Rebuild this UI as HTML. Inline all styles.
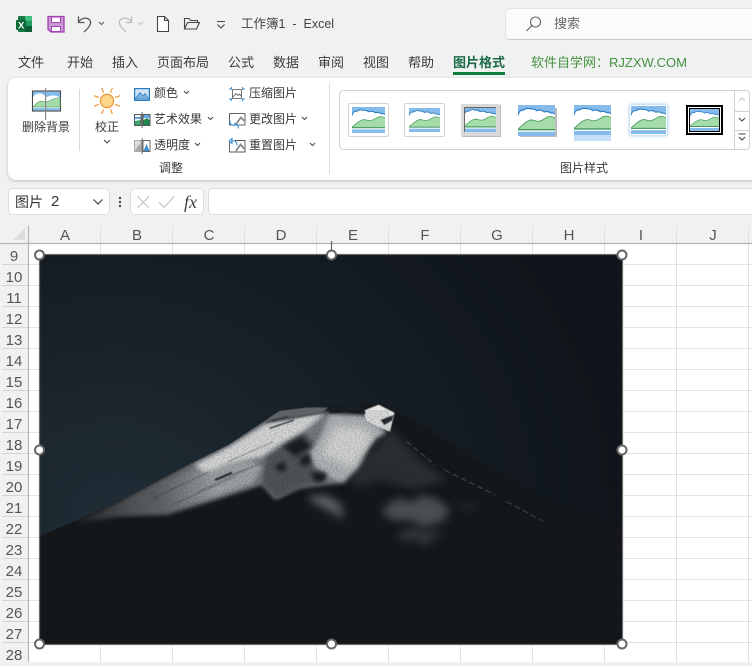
<!DOCTYPE html>
<html><head><meta charset="utf-8">
<style>
html,body{margin:0;padding:0}
body{width:752px;height:662px;overflow:hidden;position:relative;background:#f0f1f1;font-family:"Liberation Sans","Noto Sans CJK SC",sans-serif;color:#3a3a3a}
.t{position:absolute;white-space:nowrap;font-size:12.5px;line-height:16px}
.tab{position:absolute;top:55px;font-size:13px;line-height:16px;color:#3c3c3c;white-space:nowrap}
svg{position:absolute;overflow:visible}
.ab{position:absolute;box-sizing:border-box}
.r{position:absolute;left:0;width:28px;text-align:center;font-size:15px;line-height:21px;color:#555}
.c{position:absolute;top:227px;width:72px;text-align:center;font-size:15px;line-height:17px;color:#555}
filter{color-interpolation-filters:sRGB}
</style></head><body>

<svg width="0" height="0" style="position:absolute">
<defs>
<symbol id="pic" viewBox="0 0 34 27" preserveAspectRatio="none">
<rect width="34" height="27" fill="#85bbeb"/>
<path d="M0 9Q1 4 5 4.500Q8 2 12 3.500Q15 3 17 5Q21 3.500 24 6Q28 5 30 7Q33 6.500 34 8V22H0Z" fill="#fff"/>
<path d="M0 9Q1 4 5 4.500Q8 2 12 3.500Q15 3 17 5Q21 3.500 24 6Q28 5 30 7Q33 6.500 34 8" fill="none" stroke="#2a7cc0" stroke-width="1"/>
<path d="M0 21C4 18 7 14 12 13C15 13 17 15 20 14C24 13 26 10 29 10C31 10 33 11 34 11V21Z" fill="#a5dca9"/>
<path d="M0 21C4 18 7 14 12 13C15 13 17 15 20 14C24 13 26 10 29 10C31 10 33 11 34 11" fill="none" stroke="#55a56a" stroke-width=".9"/>
<rect y="21" width="34" height="1.100" fill="#2f8a4c"/>
<rect y="22.100" width="34" height="1.200" fill="#fff"/>
</symbol>
<filter id="b0" color-interpolation-filters="sRGB" x="-30%" y="-30%" width="160%" height="160%"><feGaussianBlur stdDeviation="1.500"/></filter>
<filter id="b1" color-interpolation-filters="sRGB" x="-30%" y="-30%" width="160%" height="160%"><feGaussianBlur stdDeviation="6"/></filter>
<filter id="b2" color-interpolation-filters="sRGB" x="-30%" y="-30%" width="160%" height="160%"><feGaussianBlur stdDeviation="12"/></filter>
<filter id="b3" color-interpolation-filters="sRGB" x="-10%" y="-20%" width="120%" height="140%"><feGaussianBlur stdDeviation="16"/></filter>
<filter id="cl" color-interpolation-filters="sRGB" x="-80%" y="-80%" width="260%" height="260%"><feTurbulence type="fractalNoise" baseFrequency=".025" numOctaves="3" seed="7" result="n"/><feDisplacementMap in="SourceGraphic" in2="n" scale="45" xChannelSelector="R" yChannelSelector="G"/><feGaussianBlur stdDeviation="13"/></filter>
<filter id="nz" color-interpolation-filters="sRGB" x="0" y="0" width="100%" height="100%"><feTurbulence type="fractalNoise" baseFrequency=".3 .5" numOctaves="2" seed="4"/><feColorMatrix values="0 0 0 0 0  0 0 0 0 0  0 0 0 0 0  2.400 0 0 0 -.95"/></filter>
<radialGradient id="sky" gradientUnits="userSpaceOnUse" cx="200" cy="800" r="1350">
<stop offset="0" stop-color="#202d36"/><stop offset=".35" stop-color="#19232a"/><stop offset=".7" stop-color="#131a20"/><stop offset="1" stop-color="#0f151a"/></radialGradient>
<linearGradient id="snowL" gradientUnits="userSpaceOnUse" x1="90" y1="0" x2="430" y2="0"><stop offset="0" stop-color="#24282b"/><stop offset=".45" stop-color="#55595c"/><stop offset="1" stop-color="#7c8083"/></linearGradient>
<linearGradient id="snowM" gradientUnits="userSpaceOnUse" x1="280" y1="0" x2="470" y2="0"><stop offset="0" stop-color="#53575a"/><stop offset="1" stop-color="#a6a9ab"/></linearGradient>
<clipPath id="mclip"><path d="M0 858L90 815L200 760L300 700L400 640L500 585L600 510L640 480L710 470L770 470L860 468L905 458L945 485L1050 550L1200 660L1350 750L1548 835V1183H0Z"/></clipPath>
<clipPath id="snowclip"><path d="M100 815L200 760L300 700L400 640L500 585L600 510L770 480L930 480L930 560L840 670L800 710L690 725L625 770L590 715L480 755L340 805L220 815Z"/></clipPath>
</defs>
</svg>

<!-- Title bar -->
<svg style="left:14px;top:14px" width="20" height="20" viewBox="0 0 20 20"><rect x="4" y="2" width="14" height="16" rx="1" fill="#1a7a45"/><rect x="11" y="2" width="7" height="5" fill="#3fc17f"/><rect x="11" y="7" width="7" height="5" fill="#1f9a5b"/><rect x="11" y="12" width="7" height="6" fill="#0f5f37"/><rect x="2" y="6" width="10" height="10" rx="1" fill="#0f6a3a"/><text x="4" y="14.500" font-size="9.500" font-weight="700" fill="#fff" font-family="Liberation Sans">X</text></svg>
<svg style="left:47px;top:15px" width="18" height="18" viewBox="0 0 18 18"><path d="M1 1.500H17V17H4L1 14.500Z" fill="#c99ad3" stroke="#a23fb3" stroke-width="1.300"/><rect x="4.500" y="2" width="9" height="5.500" fill="#fff" stroke="#a23fb3"/><rect x="4.500" y="11.500" width="9" height="5" fill="#fff" stroke="#a23fb3"/></svg>
<svg style="left:76px;top:14px" width="32" height="20" viewBox="0 0 32 20"><path d="M2.500 2.500V8.500H8.500M2.500 8C5 4.500 9 3 12.500 5C16.500 7.500 15 12 8 18" fill="none" stroke="#555" stroke-width="1.300"/><path d="M23 8L25.500 10.500L28 8" fill="none" stroke="#555" stroke-width="1.100"/></svg>
<svg style="left:115px;top:14px" width="32" height="20" viewBox="0 0 32 20"><path d="M16.500 2.500V8.500H10.500M16.500 8C14 4.500 10 3 6.500 5C2.500 7.500 4 12 11 18" fill="none" stroke="#bdbdbd" stroke-width="1.300"/><path d="M23 8L25.500 10.500L28 8" fill="none" stroke="#c4c4c4" stroke-width="1.100"/></svg>
<svg style="left:156px;top:15px" width="14" height="18" viewBox="0 0 14 18"><path d="M1.500 1.500H8.500L12.500 5.500V16.500H1.500ZM8.500 1.500V5.500H12.500" fill="#fff" stroke="#444" stroke-width="1.100"/></svg>
<svg style="left:183px;top:17px" width="18" height="14" viewBox="0 0 18 14"><path d="M1.500 12V1.500H6L7.500 3.500H14.500V5.500M1.500 12L4.500 5.500H16.500L13.500 12Z" fill="none" stroke="#444" stroke-width="1.100"/></svg>
<svg style="left:215px;top:20px" width="12" height="10" viewBox="0 0 12 10"><path d="M2 1.500H10M2.500 4.500L6 8L9.500 4.500" fill="none" stroke="#444" stroke-width="1.100"/></svg>
<div class="t" style="left:241px;top:16px;font-size:12.500px;color:#444">工作簿1&nbsp; - &nbsp;Excel</div>

<div class="ab" style="left:505px;top:8px;width:260px;height:32px;background:#fbfbfb;border:1px solid #e2e2e2;border-bottom:1.500px solid #c9c9c9;border-radius:5px"></div>
<svg style="left:525px;top:15px" width="18" height="18" viewBox="0 0 18 18"><circle cx="10.500" cy="7" r="5" fill="none" stroke="#666" stroke-width="1.100"/><path d="M7 10.500L1.500 16" stroke="#666" stroke-width="1.200"/></svg>
<div class="t" style="left:554px;top:16px;font-size:13px;color:#666">搜索</div>

<!-- Tabs -->
<div class="tab" style="left:18px">文件</div>
<div class="tab" style="left:67px">开始</div>
<div class="tab" style="left:112px">插入</div>
<div class="tab" style="left:157px">页面布局</div>
<div class="tab" style="left:228px">公式</div>
<div class="tab" style="left:273px">数据</div>
<div class="tab" style="left:318px">审阅</div>
<div class="tab" style="left:363px">视图</div>
<div class="tab" style="left:408px">帮助</div>
<div class="tab" style="left:453px;font-weight:700;color:#1a6b45">图片格式</div>
<div class="ab" style="left:453px;top:72px;width:52px;height:2.500px;background:#107c41"></div>
<div class="tab" style="left:531px;font-size:13px;color:#45913f">软件自学网&#xFF1A;RJZXW.COM</div>

<!-- Ribbon -->
<div class="ab" style="left:8px;top:78px;width:760px;height:102px;background:#fff;border-radius:8px;box-shadow:0 1px 3px rgba(0,0,0,.2)"></div>

<svg style="left:31px;top:88px" width="30" height="34" viewBox="0 0 30 34"><rect x="1.500" y="3" width="28" height="20" fill="#fff" stroke="#444" stroke-width="1.100"/><rect x="2" y="3.500" width="27" height="6" fill="#85bbeb"/><path d="M2 9.500C4 5 10 4 14 8L16 9C20 7 25 7 29 9.500V19H2Z" fill="#fff"/><rect x="2" y="20" width="27" height="2.500" fill="#8dc0ec"/><path d="M2 19C6 14 10 12 14 14C18 15 22 9 29 10V19Z" fill="#a5dca9" stroke="#5aa56f" stroke-width=".7"/><rect x="14" y="0" width="1.200" height="32" fill="#8a8a8a"/></svg>
<div class="t" style="left:22px;top:119px;font-size:12px">删除背景</div>
<div class="ab" style="left:79px;top:89px;width:1px;height:62px;background:#d9d9d9"></div>

<svg style="left:92px;top:86px" width="30" height="30" viewBox="0 0 30 30"><circle cx="15" cy="15" r="6.700" fill="#fbd68a" stroke="#ea8a22" stroke-width="1"/><path d="M11.600 6.700L9.600 2.100M18.400 6.700L20.400 2.100M11.600 23.300L9.600 27.900M18.400 23.300L20.400 27.900M6.700 11.600L2.100 9.600M23.300 11.600L27.900 9.600M6.700 18.400L2.100 20.400M23.300 18.400L27.900 20.400" stroke="#ea8a22" stroke-width="1.100"/></svg>
<div class="t" style="left:95px;top:119px;font-size:12px">校正</div>
<svg style="left:103px;top:139px" width="8" height="6" viewBox="0 0 8 6"><path d="M1 1L4 4L7 1" fill="none" stroke="#444" stroke-width="1"/></svg>

<svg style="left:134px;top:88px" width="16" height="13" viewBox="0 0 16 13"><rect x=".6" y=".6" width="14.800" height="11.800" fill="#cfe4f7" stroke="#2a7cc0" stroke-width="1.200"/><path d="M1 11L6 4.500L9 8L11 5.500L15 11Z" fill="#7fb4e3" stroke="#2a7cc0" stroke-width=".7"/></svg>
<div class="t" style="left:154px;top:85px;font-size:12px">颜色</div>
<svg style="left:183px;top:90px" width="8" height="6"><path d="M1 1L3.500 3.500L6 1" fill="none" stroke="#444"/></svg>
<svg style="left:134px;top:112px" width="17" height="16" viewBox="0 0 17 16"><rect x=".5" y="2.500" width="6.500" height="11" fill="#fff" stroke="#444" stroke-width=".9"/><path d="M1 5H6.500V7H1Z" fill="#5fa9e6"/><path d="M1 13V9L6.500 8V13Z" fill="#3fa36a"/><rect x="9" y="2.500" width="7" height="11" fill="#fff" stroke="#444" stroke-width=".9"/><path d="M9.500 13V8L13 6L15.500 8V13Z" fill="#1f8a50"/><path d="M9.500 3H15.500V6H9.500Z" fill="#5fa9e6"/><rect x="7.600" y="0" width="1" height="16" fill="#666"/></svg>
<div class="t" style="left:154px;top:111px;font-size:12px">艺术效果</div>
<svg style="left:207px;top:116px" width="8" height="6"><path d="M1 1L3.500 3.500L6 1" fill="none" stroke="#444"/></svg>
<svg style="left:134px;top:138px" width="17" height="16" viewBox="0 0 17 16"><rect x=".5" y="2.500" width="6.500" height="11" fill="#ddd" stroke="#999" stroke-width=".8"/><path d="M1 13L5 6L7 9V13Z" fill="#aaa"/><rect x="9" y="2.500" width="7" height="11" fill="#fff" stroke="#444" stroke-width=".8"/><path d="M9.500 13L12.500 6L15.500 13Z" fill="#3b8fd6"/><rect x="7.600" y="0" width="1" height="16" fill="#666"/></svg>
<div class="t" style="left:154px;top:137px;font-size:12px">透明度</div>
<svg style="left:194px;top:142px" width="8" height="6"><path d="M1 1L3.500 3.500L6 1" fill="none" stroke="#444"/></svg>
<div class="t" style="left:159px;top:160px;font-size:12px">调整</div>

<svg style="left:229px;top:87px" width="16" height="14" viewBox="0 0 16 14"><rect x="3.500" y="2.500" width="9" height="9" fill="#fff" stroke="#555" stroke-width=".8"/><path d="M4 10L7 6.500L9 8.500L10.500 7L12.500 9.500" fill="none" stroke="#555" stroke-width=".8"/><path d="M0 2H2.500V0M13.500 0V2H16M0 12H2.500V14M13.500 14V12H16" fill="none" stroke="#2a8ad4" stroke-width="1"/></svg>
<div class="t" style="left:249px;top:85px;font-size:12px">压缩图片</div>
<svg style="left:229px;top:113px" width="17" height="16" viewBox="0 0 17 16"><rect x=".5" y=".5" width="15.500" height="11.500" fill="#fff" stroke="#555" stroke-width=".9"/><path d="M7 11L12 4.500L15.500 8" fill="none" stroke="#888" stroke-width="1.800"/><path d="M1 7C0 11 3 13 6 12M9 15.500C10 12.500 8 10.500 5 10.500" fill="none" stroke="#2a8ad4" stroke-width="1.100"/></svg>
<div class="t" style="left:249px;top:111px;font-size:12px">更改图片</div>
<svg style="left:301px;top:116px" width="8" height="6"><path d="M1 1L3.500 3.500L6 1" fill="none" stroke="#444"/></svg>
<svg style="left:229px;top:138px" width="17" height="15" viewBox="0 0 17 15"><path d="M6 2.500H16V14H.5V3.500" fill="#fff" stroke="#555" stroke-width=".9"/><path d="M7 13L11.500 6.500L15.500 11" fill="none" stroke="#888" stroke-width="1.800"/><path d="M0 3L3 .5V5.500ZM2 3C6 2 8 4 8 7.500" fill="none" stroke="#2a8ad4" stroke-width="1"/></svg>
<div class="t" style="left:249px;top:137px;font-size:12px">重置图片</div>
<svg style="left:309px;top:142px" width="8" height="6"><path d="M1 1L3.500 3.500L6 1" fill="none" stroke="#444"/></svg>
<div class="ab" style="left:329px;top:83px;width:1px;height:91px;background:#dcdcdc"></div>

<!-- Gallery -->
<div class="ab" style="left:339px;top:90px;width:411px;height:60px;border:1px solid #d0d0d0;border-radius:4px"></div>
<div class="ab" style="left:734px;top:90px;width:1px;height:60px;background:#d0d0d0"></div>
<div class="ab" style="left:735px;top:111px;width:14px;height:1px;background:#d0d0d0"></div>
<div class="ab" style="left:735px;top:130px;width:14px;height:1px;background:#d0d0d0"></div>
<svg style="left:736px;top:96px" width="12" height="50" viewBox="0 0 12 50"><path d="M3 5L6 2L9 5" fill="none" stroke="#c4c4c4" stroke-width="1.100"/><path d="M3 22L6 25L9 22" fill="none" stroke="#444" stroke-width="1.100"/><path d="M2.500 38H9.500M3 41L6 44L9 41" fill="none" stroke="#444" stroke-width="1.100"/></svg>

<!-- thumbs -->
<div class="ab" style="left:348px;top:103px;width:41px;height:34px;background:#fff;border:1.500px solid #d4d4d4;border-radius:2px"></div>
<svg style="left:352px;top:107px" width="33" height="26"><use href="#pic" width="33" height="26"/></svg>
<div class="ab" style="left:404px;top:103px;width:41px;height:34px;background:#fff;border:1.500px solid #d4d4d4;border-radius:2px"></div>
<svg style="left:409px;top:108px" width="31" height="24"><use href="#pic" width="31" height="24"/></svg>
<div class="ab" style="left:461px;top:104px;width:39px;height:32px;background:#d9d9d9;box-shadow:1px 1px 0 #bbb"></div>
<svg style="left:464px;top:107px" width="32" height="25"><use href="#pic" width="32" height="25"/></svg>
<div class="ab" style="left:464px;top:107px;width:32px;height:25px;border-top:1px solid #666;border-left:1px solid #666"></div>
<div class="ab" style="left:520px;top:108px;width:37px;height:29px;background:#bcbcbc"></div>
<svg style="left:518px;top:105px" width="37" height="31"><use href="#pic" width="37" height="31"/></svg>
<div class="ab" style="left:574px;top:135px;width:37px;height:6px;background:#c5e0f6"></div>
<svg style="left:574px;top:105px" width="37" height="30"><use href="#pic" width="37" height="30"/></svg>
<div class="ab" style="left:630px;top:105px;width:37px;height:30px;box-shadow:0 0 2px 1.500px #c2def6;border-radius:2px"></div>
<svg style="left:631px;top:106px" width="35" height="28"><use href="#pic" width="35" height="28"/></svg>
<div class="ab" style="left:686px;top:105px;width:37px;height:30px;background:#fff;border:2px solid #000"></div>
<div class="ab" style="left:689px;top:108px;width:31px;height:24px;border:1px solid #000"></div>
<svg style="left:690px;top:109px" width="29" height="22"><use href="#pic" width="29" height="22"/></svg>
<div class="t" style="left:560px;top:160px;font-size:12px">图片样式</div>

<!-- Formula bar -->
<div class="ab" style="left:8px;top:188px;width:102px;height:27px;background:#fff;border:1px solid #dedede;border-radius:5px"></div>
<div class="t" style="left:15px;top:194px;font-size:14px;color:#333">图片</div>
<div class="t" style="left:51px;top:194px;font-size:15px;color:#333">2</div>
<svg style="left:92px;top:198px" width="12" height="8" viewBox="0 0 12 8"><path d="M1.500 1.500L6 6L10.500 1.500" fill="none" stroke="#444" stroke-width="1.200"/></svg>
<svg style="left:118px;top:196px" width="4" height="12"><circle cx="2" cy="2" r="1.200" fill="#444"/><circle cx="2" cy="6" r="1.200" fill="#444"/><circle cx="2" cy="10" r="1.200" fill="#444"/></svg>
<div class="ab" style="left:130px;top:188px;width:74px;height:27px;background:#fff;border:1px solid #dedede;border-radius:5px"></div>
<svg style="left:136px;top:195px" width="40" height="14" viewBox="0 0 40 14"><path d="M1.500 1.500L13 13M13 1.500L1.500 13" stroke="#c3c3c3" stroke-width="1.200"/><path d="M23 7L28 12.500L38 1.500" fill="none" stroke="#c3c3c3" stroke-width="1.200"/></svg>
<div class="t" style="left:184px;top:194px;font-family:'Liberation Serif',serif;font-style:italic;font-size:18px;color:#444">fx</div>
<div class="ab" style="left:208px;top:188px;width:560px;height:27px;background:#fff;border:1px solid #dedede;border-radius:5px"></div>

<!-- Grid -->
<div class="ab" style="left:29px;top:244px;width:723px;height:418px;background:#fff"></div>
<svg style="left:0;top:222px" width="752" height="440" viewBox="0 222 752 440">
<path d="M101 226V662M173 226V662M245 226V662M317 226V662M389 226V662M461 226V662M533 226V662M605 226V662M677 226V662M749 226V662" stroke="#e0e0e0" stroke-width="1" transform="translate(-.5 0)"/>
<path d="M29 264.500H752M29 285.500H752M29 306.500H752M29 327.500H752M29 348.500H752M29 369.500H752M29 390.500H752M29 411.500H752M29 432.500H752M29 453.500H752M29 474.500H752M29 495.500H752M29 516.500H752M29 537.500H752M29 558.500H752M29 579.500H752M29 600.500H752M29 621.500H752M29 642.500H752" stroke="#e2e2e2"/>
<path d="M2 264.500H28M2 285.500H28M2 306.500H28M2 327.500H28M2 348.500H28M2 369.500H28M2 390.500H28M2 411.500H28M2 432.500H28M2 453.500H28M2 474.500H28M2 495.500H28M2 516.500H28M2 537.500H28M2 558.500H28M2 579.500H28M2 600.500H28M2 621.500H28M2 642.500H28" stroke="#d4d4d4"/>
<path d="M0 243.500H752" stroke="#b4b4b4" stroke-width="1.200"/>
<path d="M28.500 226V662" stroke="#b4b4b4" stroke-width="1.200"/>
<path d="M13 240H25V228Z" fill="#dcdcdc"/>
</svg>

<div class="c" style="left:29px">A</div><div class="c" style="left:101px">B</div><div class="c" style="left:173px">C</div><div class="c" style="left:245px">D</div><div class="c" style="left:317px">E</div><div class="c" style="left:389px">F</div><div class="c" style="left:461px">G</div><div class="c" style="left:533px">H</div><div class="c" style="left:605px">I</div><div class="c" style="left:677px">J</div>

<div class="r" style="top:246px">9</div><div class="r" style="top:267px">10</div><div class="r" style="top:288px">11</div><div class="r" style="top:309px">12</div><div class="r" style="top:330px">13</div><div class="r" style="top:351px">14</div><div class="r" style="top:372px">15</div><div class="r" style="top:393px">16</div><div class="r" style="top:414px">17</div><div class="r" style="top:435px">18</div><div class="r" style="top:456px">19</div><div class="r" style="top:477px">20</div><div class="r" style="top:498px">21</div><div class="r" style="top:519px">22</div><div class="r" style="top:540px">23</div><div class="r" style="top:561px">24</div><div class="r" style="top:582px">25</div><div class="r" style="top:603px">26</div><div class="r" style="top:624px">27</div><div class="r" style="top:645px">28</div>

<!-- Picture -->
<svg style="left:0;top:0" width="752" height="662" viewBox="0 0 752 662">
<g transform="translate(40 250) scale(.3763 .33333)">
<rect x="0" y="15" width="1548" height="1168" fill="url(#sky)"/>
<path d="M0 858L90 815L200 760L300 700L400 640L500 585L600 510L640 480L710 470L770 470L860 468L905 458L945 485L1050 550L1200 660L1350 750L1548 835V1183H0Z" fill="#14171a"/>
<g clip-path="url(#mclip)">
<!-- right face -->
<path d="M870 590L930 530L1000 620L1080 690L1000 720L880 720L820 700Z" fill="#2a2d30" filter="url(#b2)"/>
<path d="M975 575L1050 645M1075 660L1210 735M1240 755L1340 815" fill="none" stroke="#8a8e91" stroke-width="3" stroke-dasharray="16 9" opacity=".4"/>
<!-- grey base of snow -->
<path d="M90 820L200 760L300 700L400 640L500 585L600 510L770 485L800 700L690 715L625 750L590 705L480 745L340 795L220 800Z" fill="url(#snowL)" filter="url(#b1)"/>
<path d="M600 620L700 545L755 610L755 690L680 715L630 745L590 700Z" fill="#54585b" filter="url(#b1)"/>
<!-- mid-bright -->
<path d="M290 725L430 650L560 632L590 650L565 700L470 738L360 772L300 755Z" fill="url(#snowM)" filter="url(#b1)"/>
<!-- bright ridge -->
<path d="M410 645L500 592L600 522L700 497L757 490L705 540L640 582L590 620L500 642L440 668Z" fill="#dcdedf" filter="url(#b1)"/>
<path d="M610 490L640 482L710 472L765 472L750 490L680 505L600 520Z" fill="#5f6366" filter="url(#b0)"/>
<!-- slope streaks -->
<path d="M300 745L450 665M350 765L520 680M420 725L565 650M500 635L620 575M470 690L590 640" fill="none" stroke="#2a2d30" stroke-width="2.500" opacity=".45" filter="url(#b0)"/>
<!-- central face -->
<path d="M770 490L860 495L920 545L880 590L840 660L805 700L770 680L730 650L715 610L745 560Z" fill="#b7babc" filter="url(#b1)"/>
<path d="M785 530L860 535L885 565L830 655L790 630L745 615Z" fill="#dadcdd" filter="url(#b2)"/>
<!-- summit -->
<path d="M860 482L900 464L942 488L930 545L895 530L865 510Z" fill="#e3e5e6" filter="url(#b0)"/>
<path d="M770 472L860 470L865 492L810 486L770 490Z" fill="#1b1e21" filter="url(#b0)"/>
<path d="M905 510L940 495L935 512L915 525Z" fill="#2a2d30" filter="url(#b0)"/>
<path d="M610 535L675 510M615 512L660 500" stroke="#33373a" stroke-width="4" filter="url(#b0)"/>
<path d="M465 690L510 668" stroke="#26292c" stroke-width="6" filter="url(#b0)"/>
<path d="M645 590L695 560L720 590L680 620ZM625 645L650 635L655 660L632 665ZM720 668L762 668L756 696L730 696ZM885 605L915 558L895 565L855 635ZM690 625L715 610L720 640L695 650Z" fill="#1d2023" filter="url(#b1)"/>
<!-- noise limited to the snow -->
<g clip-path="url(#snowclip)"><rect x="90" y="460" width="860" height="360" filter="url(#nz)" opacity=".32"/></g>
<!-- shade toward base -->
<path d="M-60 890L150 832L340 818L480 772L590 738L625 785L690 742L760 728L830 738L900 685L1030 745L1250 805L1600 880V1240H-60Z" fill="#14171a" filter="url(#b3)"/>
<!-- clouds -->
<ellipse cx="765" cy="762" rx="50" ry="22" fill="#6f7377" opacity=".85" filter="url(#cl)" transform="rotate(32 765 762)"/>
<ellipse cx="1000" cy="785" rx="85" ry="40" fill="#505458" opacity=".9" filter="url(#cl)"/>
<ellipse cx="1010" cy="855" rx="55" ry="20" fill="#34373a" filter="url(#cl)"/>
<ellipse cx="1135" cy="765" rx="20" ry="12" fill="#2c2f32" filter="url(#cl)"/>
</g>
</g>
<rect x="39.500" y="254.500" width="583" height="390" fill="none" stroke="#6a6a6a" stroke-width="1.200"/>
<path d="M331.500 241V252" stroke="#666" stroke-width="1.200"/>
<g fill="#fff" stroke="#666" stroke-width="2"><circle cx="39.500" cy="255" r="4.500"/><circle cx="331.500" cy="255" r="4.500"/><circle cx="622" cy="255" r="4.500"/><circle cx="39.500" cy="450" r="4.500"/><circle cx="622" cy="450" r="4.500"/><circle cx="39.500" cy="644" r="4.500"/><circle cx="331.500" cy="644" r="4.500"/><circle cx="622" cy="644" r="4.500"/></g>
</svg>

</body></html>
